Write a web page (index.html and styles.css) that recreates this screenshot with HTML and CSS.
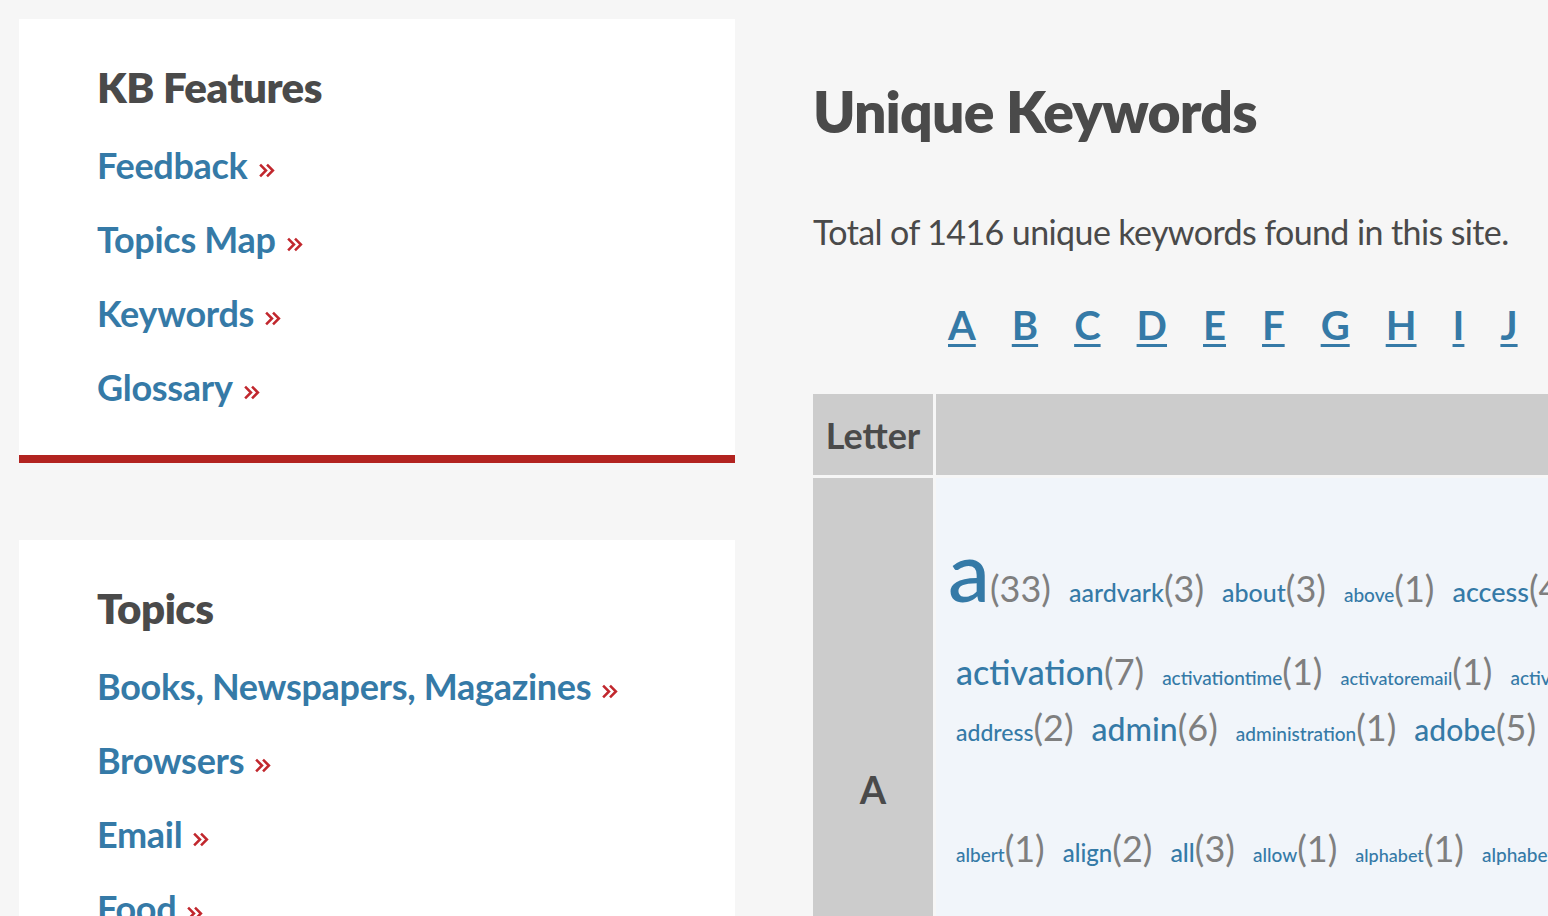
FILE: index.html
```html
<!DOCTYPE html>
<html>
<head>
	<meta charset="utf-8">
	<title>Unique Keywords</title>
	<link rel="stylesheet" href="styles.css">
</head>
<body>
	<div class="page">
		<aside class="sidebar">
			<section class="card card-features">
				<h3>KB Features</h3>
				<ul class="card-links">
					<li><a href="#">Feedback<svg class="more" viewBox="0 0 16 16"><path d="M2 2.5 7.5 8 2 13.5M8.5 2.5 14 8 8.5 13.5"/></svg></a></li>
					<li><a href="#">Topics Map<svg class="more" viewBox="0 0 16 16"><path d="M2 2.5 7.5 8 2 13.5M8.5 2.5 14 8 8.5 13.5"/></svg></a></li>
					<li><a href="#">Keywords<svg class="more" viewBox="0 0 16 16"><path d="M2 2.5 7.5 8 2 13.5M8.5 2.5 14 8 8.5 13.5"/></svg></a></li>
					<li><a href="#">Glossary<svg class="more" viewBox="0 0 16 16"><path d="M2 2.5 7.5 8 2 13.5M8.5 2.5 14 8 8.5 13.5"/></svg></a></li>
				</ul>
			</section>
			<section class="card">
				<h3>Topics</h3>
				<ul class="card-links">
					<li><a href="#">Books, Newspapers, Magazines<svg class="more" viewBox="0 0 16 16"><path d="M2 2.5 7.5 8 2 13.5M8.5 2.5 14 8 8.5 13.5"/></svg></a></li>
					<li><a href="#">Browsers<svg class="more" viewBox="0 0 16 16"><path d="M2 2.5 7.5 8 2 13.5M8.5 2.5 14 8 8.5 13.5"/></svg></a></li>
					<li><a href="#">Email<svg class="more" viewBox="0 0 16 16"><path d="M2 2.5 7.5 8 2 13.5M8.5 2.5 14 8 8.5 13.5"/></svg></a></li>
					<li><a href="#">Food<svg class="more" viewBox="0 0 16 16"><path d="M2 2.5 7.5 8 2 13.5M8.5 2.5 14 8 8.5 13.5"/></svg></a></li>
				</ul>
			</section>
		</aside>

		<main class="content">
			<h1>Unique Keywords</h1>
			<p class="total">Total of 1416 unique keywords found in this site.</p>
			<div class="letters">
				<a href="#A">A</a><a href="#B">B</a><a href="#C">C</a><a href="#D">D</a><a href="#E">E</a>
				<a href="#F">F</a><a href="#G">G</a><a href="#H">H</a><a href="#I">I</a><a href="#J">J</a>
				<a href="#K">K</a><a href="#L">L</a><a href="#M">M</a>
			</div>

			<table class="kw-table">
				<tr>
					<th class="col-letter">Letter</th>
					<th></th>
				</tr>
				<tr>
					<td class="letter-cell">A</td>
					<td class="kw-cell">
						<div class="kw-line l1">
							<span class="kw"><a href="#" style="font-size:84px">a</a><span class="count">(33)</span></span>
							<span class="kw"><a href="#" style="font-size:25px">aardvark</a><span class="count">(3)</span></span>
							<span class="kw"><a href="#" style="font-size:25px">about</a><span class="count">(3)</span></span>
							<span class="kw"><a href="#" style="font-size:19px">above</a><span class="count">(1)</span></span>
							<span class="kw"><a href="#" style="font-size:27px">access</a><span class="count">(4)</span></span>
							<span class="kw"><a href="#" style="font-size:22px">account</a><span class="count">(2)</span></span>
						</div>
						<div class="kw-line l2">
							<span class="kw"><a href="#" style="font-size:34px">activation</a><span class="count">(7)</span></span>
							<span class="kw"><a href="#" style="font-size:19px">activationtime</a><span class="count">(1)</span></span>
							<span class="kw"><a href="#" style="font-size:18px">activatoremail</a><span class="count">(1)</span></span>
							<span class="kw"><a href="#" style="font-size:19px">activated</a><span class="count">(1)</span></span>
						</div>
						<div class="kw-line l3">
							<span class="kw"><a href="#" style="font-size:23px">address</a><span class="count">(2)</span></span>
							<span class="kw"><a href="#" style="font-size:32px">admin</a><span class="count">(6)</span></span>
							<span class="kw"><a href="#" style="font-size:19px">administration</a><span class="count">(1)</span></span>
							<span class="kw"><a href="#" style="font-size:30px">adobe</a><span class="count">(5)</span></span>
							<span class="kw"><a href="#" style="font-size:19px">advanced</a><span class="count">(1)</span></span>
						</div>
						<div class="kw-line l4">
							<span class="kw"><a href="#" style="font-size:19px">albert</a><span class="count">(1)</span></span>
							<span class="kw"><a href="#" style="font-size:24px">align</a><span class="count">(2)</span></span>
							<span class="kw"><a href="#" style="font-size:25px">all</a><span class="count">(3)</span></span>
							<span class="kw"><a href="#" style="font-size:19px">allow</a><span class="count">(1)</span></span>
							<span class="kw"><a href="#" style="font-size:18px">alphabet</a><span class="count">(1)</span></span>
							<span class="kw"><a href="#" style="font-size:19px">alphabetical</a><span class="count">(1)</span></span>
						</div>
					</td>
				</tr>
			</table>
		</main>
	</div>
</body>
</html>
```

FILE: styles.css
```css
html, body {
	margin: 0;
}
body {
	background-color: #f6f6f6;
	font-family: Lato, "Open Sans", sans-serif;
	color: #4a4a4a;
	overflow: hidden;
}

.page {
	display: flex;
	gap: 78px;
	padding: 19px;
}

/* left column */
.sidebar {
	flex: 0 0 716px;
	display: flex;
	flex-direction: column;
	gap: 77px;
}
.card {
	background-color: #fff;
	padding: 44px 78px 31px;
}
.card-features {
	border-bottom: 8px solid #b22320;
}
.card h3 {
	margin: 0 0 17px;
	font-size: 42px;
	line-height: 48px;
	font-weight: 800;
	letter-spacing: -0.5px;
}
.card-links {
	list-style: none;
	margin: 0;
	padding: 0;
}
.card-links li {
	font-size: 36px;
	line-height: 74px;
	font-weight: 700;
	letter-spacing: -0.3px;
}
.card-links a {
	color: #357aa7;
	text-decoration: none;
}
.more {
	width: 17px;
	height: 17px;
	margin-left: 10px;
	vertical-align: baseline;
	fill: none;
	stroke: #c1272d;
	stroke-width: 2.4;
}

/* main column */
.content {
	flex: 0 0 1300px;
	padding-top: 58px;
}
.content h1 {
	margin: 0;
	font-size: 57px;
	line-height: 1.2;
	font-weight: 800;
	letter-spacing: -0.8px;
}
.total {
	margin: 67px 0 0;
	font-size: 34px;
	line-height: 1.2;
	letter-spacing: -0.6px;
}
.letters {
	display: flex;
	gap: 36px;
	margin-top: 48px;
	padding-left: 135px;
	font-size: 40px;
	line-height: 48px;
	font-weight: 700;
}
.letters a {
	color: #357aa7;
	text-decoration: underline;
	text-decoration-thickness: 3px;
	text-underline-offset: 4px;
}

.kw-table {
	border-spacing: 3px;
	margin: 42px 0 0 -3px;
	width: 1400px;
}
.kw-table th {
	background-color: #ccc;
	height: 81px;
	padding: 0;
	font-size: 36px;
	font-weight: 700;
}
.col-letter {
	width: 120px;
}
.letter-cell {
	background-color: #ccc;
	text-align: center;
	vertical-align: middle;
	font-size: 38px;
	font-weight: 700;
}
.kw-cell {
	background-color: #f1f5fa;
	height: 622px;
	padding: 0;
	vertical-align: top;
}

/* keyword lines: font-size 0 keeps the baseline at the middle of each line */
.kw-line {
	font-size: 0;
	white-space: nowrap;
	margin-left: 20px;
}
.kw-line.l1 {
	height: 100px;
	line-height: 100px;
	margin-top: 74px;
	margin-left: 12px;
}
.kw-line.l2 {
	height: 60px;
	line-height: 60px;
	margin-top: 3px;
}
.kw-line.l3 {
	height: 50px;
	line-height: 50px;
	margin-top: 1px;
}
.kw-line.l4 {
	height: 60px;
	line-height: 60px;
	margin-top: 66px;
}
.kw {
	margin-right: 18px;
}
.kw a {
	line-height: 0;
	color: #357aa7;
	text-decoration: none;
	font-weight: 500;
}
.count {
	line-height: 0;
	color: #7f7f7f;
	font-size: 36px;
	font-weight: 400;
}
```
